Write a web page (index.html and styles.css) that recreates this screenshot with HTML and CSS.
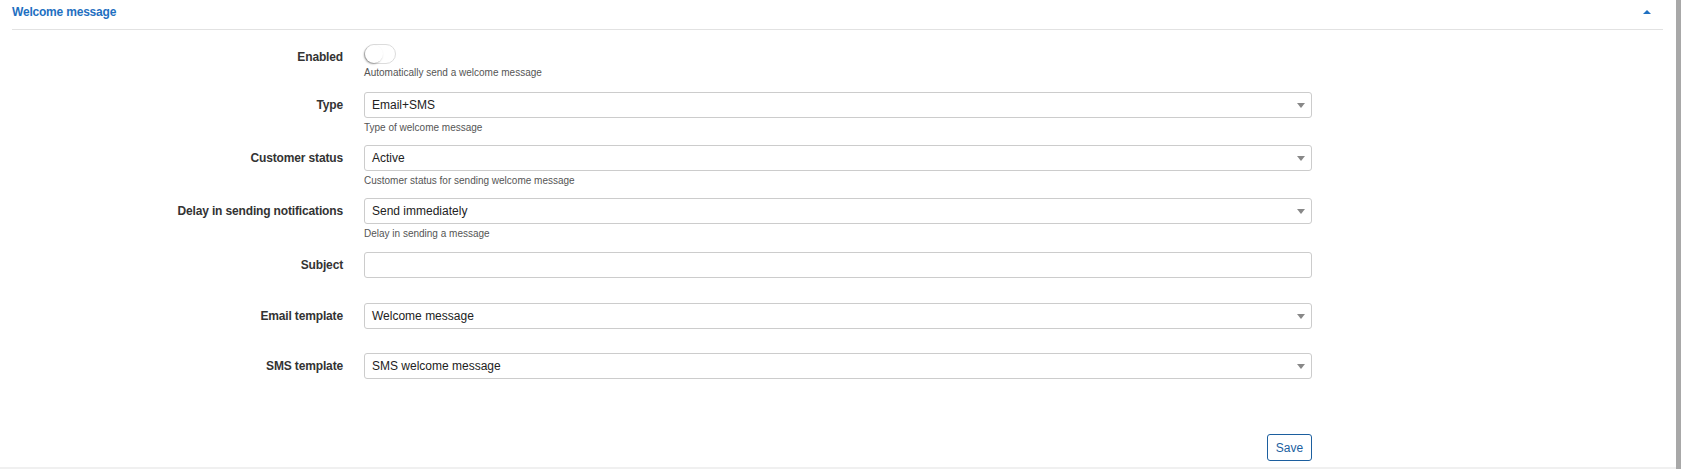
FILE: index.html
```html
<!DOCTYPE html>
<html lang="en">
<head>
<meta charset="utf-8">
<title>Welcome message</title>
<link rel="stylesheet" href="styles.css">
</head>
<body>
<div class="page">
  <main class="main">
    <div class="panel">
      <div class="panel-head">
        <span class="panel-title">Welcome message</span>
        <span class="caret-up"></span>
      </div>
      <form class="form">
        <div class="row row-help row-toggle">
          <label class="label label-toggle">Enabled</label>
          <div class="control">
            <span class="switch"><span class="knob"></span></span>
            <div class="help help-toggle">Automatically send a welcome message</div>
          </div>
        </div>
        <div class="row row-help">
          <label class="label">Type</label>
          <div class="control">
            <div class="select"><span class="value">Email+SMS</span><span class="arrow"></span></div>
            <div class="help">Type of welcome message</div>
          </div>
        </div>
        <div class="row row-help">
          <label class="label">Customer status</label>
          <div class="control">
            <div class="select"><span class="value">Active</span><span class="arrow"></span></div>
            <div class="help">Customer status for sending welcome message</div>
          </div>
        </div>
        <div class="row row-help row-help-tall">
          <label class="label">Delay in sending notifications</label>
          <div class="control">
            <div class="select"><span class="value">Send immediately</span><span class="arrow"></span></div>
            <div class="help">Delay in sending a message</div>
          </div>
        </div>
        <div class="row">
          <label class="label">Subject</label>
          <div class="control">
            <div class="input"></div>
          </div>
        </div>
        <div class="row row-short">
          <label class="label">Email template</label>
          <div class="control">
            <div class="select"><span class="value">Welcome message</span><span class="arrow"></span></div>
          </div>
        </div>
        <div class="row row-last">
          <label class="label">SMS template</label>
          <div class="control">
            <div class="select"><span class="value">SMS welcome message</span><span class="arrow"></span></div>
          </div>
        </div>
        <div class="row row-actions">
          <div></div>
          <div class="control actions">
            <button type="button" class="btn">Save</button>
          </div>
        </div>
      </form>
    </div>
  </main>
  <div class="scrollbar"></div>
</div>
</body>
</html>
```
FILE: styles.css
```css
* { box-sizing: border-box; }
html, body {
  margin: 0;
  padding: 0;
  background: #ffffff;
  font-family: "Liberation Sans", Arial, sans-serif;
  color: #333333;
}
.page {
  display: flex;
  height: 469px;
  overflow: hidden;
}
.main {
  flex: 1;
  height: 469px;
  border-bottom: 2px solid #f0f0f0;
  padding: 0 13px 0 12px;
}
.scrollbar {
  width: 5px;
  background: #a8a8a8;
}
.panel-head {
  display: flex;
  align-items: center;
  justify-content: space-between;
  padding: 4px 12px 9px 0;
  height: 30px;
  border-bottom: 1px solid #e2e2e2;
}
.panel-title {
  font-size: 12px;
  font-weight: bold;
  line-height: 16px;
  color: #1f70c1;
  letter-spacing: -0.2px;
}
.caret-up {
  width: 0;
  height: 0;
  border-style: solid;
  border-width: 0 4px 4px 4px;
  border-color: transparent transparent #1f70c1 transparent;
}
.form {
  padding-top: 14px;
}
.row {
  display: grid;
  grid-template-columns: 331px 948px;
  column-gap: 21px;
  margin-bottom: 25px;
}
.row-help { margin-bottom: 11px; }
.row-help-tall { margin-bottom: 12px; }
.row-toggle { margin-bottom: 13px; }
.row-short { margin-bottom: 24px; }
.row-last { margin-bottom: 55px; }
.label {
  text-align: right;
  font-size: 12px;
  font-weight: bold;
  letter-spacing: -0.15px;
  line-height: 26px;
  color: #333333;
}
.label-toggle {
  line-height: 16px;
  padding-top: 5px;
}
.control {
  display: flex;
  flex-direction: column;
}
.switch {
  display: block;
  width: 32px;
  height: 20px;
  border: 1px solid #dcdcdc;
  border-radius: 10px;
  background: #ffffff;
  position: relative;
}
.knob {
  position: absolute;
  left: 0;
  top: 0;
  width: 18px;
  height: 18px;
  border-radius: 50%;
  background: #ffffff;
  box-shadow: -1px 1px 2px rgba(0, 0, 0, 0.35);
}
.help {
  font-size: 10px;
  line-height: 13px;
  margin-top: 3px;
  color: #555555;
}
.help-toggle { margin-top: 2px; }
.select, .input {
  height: 26px;
  border: 1px solid #cccccc;
  border-radius: 3px;
  background: #ffffff;
  display: flex;
  align-items: center;
  justify-content: space-between;
  padding: 0 6px 0 7px;
}
.value {
  font-size: 12px;
  color: #222222;
}
.arrow {
  width: 0;
  height: 0;
  border-style: solid;
  border-width: 5px 4px 0 4px;
  border-color: #888888 transparent transparent transparent;
}
.actions {
  align-items: flex-end;
}
.btn {
  width: 45px;
  height: 27px;
  border: 1px solid #1c5f9f;
  border-radius: 3px;
  background: #ffffff;
  color: #1c5f9f;
  font-family: "Liberation Sans", Arial, sans-serif;
  font-size: 12px;
  padding: 0;
}
```
